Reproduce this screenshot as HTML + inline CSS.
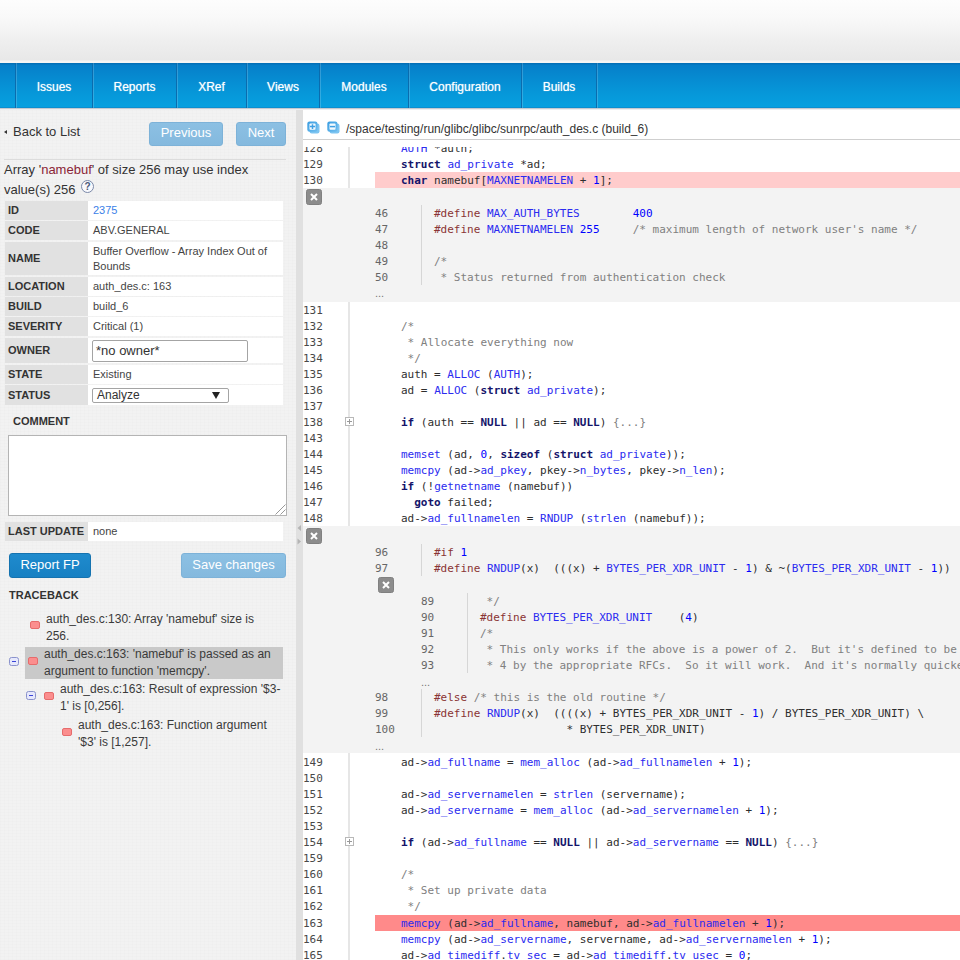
<!DOCTYPE html>
<html lang="en"><head><meta charset="utf-8"><title>Issue 2375 - auth_des.c</title>
<style>
*{box-sizing:border-box;margin:0;padding:0}
html,body{width:960px;height:960px;overflow:hidden;background:#fff;font-family:"Liberation Sans",Arial,sans-serif;}
.abs{position:absolute}
#top{position:absolute;left:0;top:0;width:960px;height:63px;background:linear-gradient(#fdfdfd 0px,#f9f9f9 18px,#efefef 40px,#e8e8e8 60px,#f7f6f4 61px,#f7f6f4 63px)}
#nav{position:absolute;left:0;top:63px;width:960px;height:45px;background:linear-gradient(#0571b8 0,#0571b8 1px,#067fc9 2px,#0688cf 12px,#0697d9 30px,#06a0e0 44px,#0a8fd0 44px,#0a8fd0 45px);box-shadow:0 1px 0 #c4cad0,0 2px 0 #eceef0;z-index:3}
#nav .tab{position:absolute;top:0;height:45px;border-left:1px solid #0a6cae;box-shadow:inset 1px 0 0 rgba(255,255,255,.18);color:#fff;font-size:12px;line-height:49px;text-align:center;text-shadow:0 0 1px rgba(255,255,255,.7)}
#left{position:absolute;left:0;top:108px;width:296px;height:852px;background-color:#f2f2f2;background-image:repeating-linear-gradient(0deg,rgba(0,0,0,.009) 0 1px,transparent 1px 3px),repeating-linear-gradient(90deg,rgba(0,0,0,.009) 0 1px,transparent 1px 4px);color:#333}
#split{position:absolute;left:296px;top:108px;width:7px;height:852px;background:#e0e0e0}
#right{position:absolute;left:303px;top:108px;width:657px;height:852px;background:#fff;overflow:hidden}
.btn{position:absolute;border-radius:3px;color:#fff;text-align:center;font-size:13px}
.btn.dis{background:linear-gradient(#8cc0e3,#84b9de);border:1px solid #7db2d8}
.btn.act{background:linear-gradient(#1f8bcd,#1780c3);border:1px solid #1573b0}
.th{position:absolute;left:5px;width:83px;background:#e1e1e1;padding-left:3px;font-weight:bold;font-size:11px;color:#333}
.td{position:absolute;left:88px;width:195px;background:#fff;padding-left:5px;font-size:11px;color:#444}
.code{font-family:"DejaVu Sans Mono","Liberation Mono",monospace;font-size:11px;line-height:16px;white-space:pre;color:#2e2e2e;position:absolute;height:16px}
.ln{font-family:"DejaVu Sans Mono","Liberation Mono",monospace;font-size:11px;line-height:16px;position:absolute;color:#484848;height:16px}
.ln.sub{color:#666}
.k{font-weight:bold;color:#14146a}
.i{color:#2b2bf0}
.n{color:#0000ff}
.p{color:#8a3434}
.c{color:#808080}
.hl1{position:absolute;left:375px;width:585px;height:16px;background:#ffcccc}
.hl2{position:absolute;left:375px;width:585px;height:16px;background:#ff8a8a}
.panel{position:absolute;left:303px;width:657px;background:#f3f3f3}
.xb{position:absolute;width:16px;height:16px;background:#8c8c8c;border:1px solid #808080;border-radius:2.5px}
.xb svg{position:absolute;left:0;top:0}
.vl{position:absolute;width:2px;background:#e6e6e6}
.vl.s{width:1px;background:#d6d6d6}
.fold{position:absolute;width:9px;height:9px;border:1px solid #b8b8b8;background:#fff}
.fold:before{content:"";position:absolute;left:1px;top:3px;width:5px;height:1px;background:#999}
.fold:after{content:"";position:absolute;left:3px;top:1px;width:1px;height:5px;background:#999}
.dots{position:absolute;font-size:11px;color:#777;font-family:"Liberation Sans",sans-serif;line-height:10px;margin-top:-1px}
.tb{position:absolute;font-size:12px;color:#3a3a3a;line-height:17px}
.bug{position:absolute;width:10px;height:8px;background:#fb8e8e;border:1px solid #e66c6c;border-radius:2px;margin-top:1px}
.tg{position:absolute;width:10px;height:9px;border:1px solid #8a92cc;border-radius:2.5px;background:#e6e8fb;margin-top:1px}
.tg:before{content:"";position:absolute;left:2px;top:3px;width:4px;height:1px;background:#3a44d8}
</style></head><body>
<div id="top"></div>
<div id="nav">
<div class="tab" style="left:15px;width:77px">Issues</div><div class="tab" style="left:92px;width:84px">Reports</div><div class="tab" style="left:176px;width:70px">XRef</div><div class="tab" style="left:246px;width:73px">Views</div><div class="tab" style="left:319px;width:89px">Modules</div><div class="tab" style="left:408px;width:113px">Configuration</div><div class="tab" style="left:521px;width:75px">Builds</div><div class="tab" style="left:596px;width:364px"></div></div>
<div id="left">
<div class="abs" style="left:4px;top:15px;font-size:13px;line-height:17px;color:#333"><span style="display:inline-block;width:0;height:0;border:2.5px solid transparent;border-right:3px solid #333;border-left:0;vertical-align:2px;margin-right:6px"></span>Back to List</div>
<div class="btn dis" style="left:149px;top:14px;width:74px;height:24px;line-height:19px">Previous</div>
<div class="btn dis" style="left:236px;top:14px;width:50px;height:24px;line-height:19px">Next</div>
<div class="abs" style="left:4px;top:51px;width:282px;height:1px;background:#dcdcdc"></div>
<div class="abs" style="left:4px;top:52px;font-size:13px;line-height:20px;color:#333;width:288px">Array '<span style="color:#8a2436">namebuf</span>' of size 256 may use index<br>value(s) 256 <span style="display:inline-block;width:13px;height:13px;border:1px solid #7a88a8;border-radius:50%;background:#f8f9fd;font-size:10px;font-weight:bold;line-height:11px;text-align:center;color:#4a5878;position:relative;top:-4px;left:2px">?</span></div>
<div class="th" style="top:93px;height:19px;line-height:19px">ID</div><div class="td" style="top:93px;height:19px;line-height:19px"><span style="color:#3b7fe8">2375</span></div>
<div class="th" style="top:113px;height:19px;line-height:19px">CODE</div><div class="td" style="top:113px;height:19px;line-height:19px">ABV.GENERAL</div>
<div class="th" style="top:134px;height:33px;line-height:33px">NAME</div><div class="td" style="top:134px;height:33px;line-height:15px;padding-top:2px">Buffer Overflow - Array Index Out of<br>Bounds</div>
<div class="th" style="top:169px;height:19px;line-height:19px">LOCATION</div><div class="td" style="top:169px;height:19px;line-height:19px">auth_des.c: 163</div>
<div class="th" style="top:189px;height:19px;line-height:19px">BUILD</div><div class="td" style="top:189px;height:19px;line-height:19px">build_6</div>
<div class="th" style="top:209px;height:19px;line-height:19px">SEVERITY</div><div class="td" style="top:209px;height:19px;line-height:19px">Critical (1)</div>
<div class="th" style="top:230px;height:25px;line-height:25px">OWNER</div><div class="td" style="top:230px;height:25px;line-height:25px"></div>
<div class="th" style="top:257px;height:19px;line-height:19px">STATE</div><div class="td" style="top:257px;height:19px;line-height:19px">Existing</div>
<div class="th" style="top:277px;height:20px;line-height:20px">STATUS</div><div class="td" style="top:277px;height:20px;line-height:20px"></div>
<div class="th" style="top:414px;height:19px;line-height:19px">LAST UPDATE</div><div class="td" style="top:414px;height:19px;line-height:19px">none</div>
<div class="abs" style="left:92px;top:232px;width:156px;height:22px;border:1px solid #a4a4a4;border-radius:2px;background:#fff;font-size:13px;line-height:20px;padding-left:3px;color:#333">*no owner*</div>
<div class="abs" style="left:92px;top:280px;width:137px;height:15px;border:1px solid #a4a4a4;border-radius:2px;background:#fff;font-size:12px;line-height:13px;padding-left:4px;color:#333">Analyze<span style="position:absolute;left:119px;top:3px;width:0;height:0;border-left:4.5px solid transparent;border-right:4.5px solid transparent;border-top:7px solid #222"></span></div>
<div class="abs" style="left:13px;top:306px;font-size:11px;font-weight:bold;color:#333;line-height:14px">COMMENT</div>
<div class="abs" style="left:8px;top:327px;width:279px;height:81px;background:#fff;border:1px solid #b4b4b4"></div>
<svg class="abs" style="left:274px;top:395px" width="12" height="12"><path d="M1.5 11.5 L11.5 1.5 M6.5 11.5 L11.5 6.5" stroke="#999" stroke-width="1" fill="none"/></svg>
<div class="btn act" style="left:9px;top:445px;width:82px;height:25px;line-height:22px">Report FP</div>
<div class="btn dis" style="left:181px;top:445px;width:105px;height:25px;line-height:22px">Save changes</div>
<div class="abs" style="left:9px;top:480px;font-size:11px;font-weight:bold;color:#333;line-height:14px">TRACEBACK</div>
<div class="abs" style="left:25px;top:539px;width:258px;height:32px;background:#c9c9c9"></div>
<div class="bug" style="left:30px;top:512px"></div>
<div class="tb" style="left:46px;top:503px">auth_des.c:130: Array 'namebuf' size is<br>256.</div>
<div class="tg" style="left:9px;top:548px"></div>
<div class="bug" style="left:28px;top:548px"></div>
<div class="tb" style="left:44px;top:538px">auth_des.c:163: 'namebuf' is passed as an<br>argument to function 'memcpy'.</div>
<div class="tg" style="left:26px;top:582px"></div>
<div class="bug" style="left:44px;top:583px"></div>
<div class="tb" style="left:60px;top:573px">auth_des.c:163: Result of expression '$3-<br>1' is [0,256].</div>
<div class="bug" style="left:62px;top:619px"></div>
<div class="tb" style="left:78px;top:609px">auth_des.c:163: Function argument<br>'$3' is [1,257].</div>
</div>
<div id="split"></div>
<div id="right"></div>
<div class="abs" style="left:303px;top:139px;width:657px;height:1px;background:#cfcfcf"></div>
<div class="abs" style="left:346px;top:121px;font-size:12px;line-height:16px;color:#333">/space/testing/run/glibc/glibc/sunrpc/auth_des.c (build_6)</div>
<svg class="abs" style="left:307px;top:121px" width="13" height="13" viewBox="0 0 13 13"><defs><linearGradient id="iga" x1="0" y1="0" x2="1" y2="1"><stop offset="0" stop-color="#3a9de1"/><stop offset="1" stop-color="#6fbdee"/></linearGradient></defs><rect x="2.5" y="2.5" width="10" height="10" rx="2.2" fill="#7cc4f1"/><rect x="0.3" y="0.5" width="10.2" height="10.2" rx="2.2" fill="url(#iga)"/><rect x="2.5" y="2.5" width="6" height="6.2" rx=".8" fill="#f4fafe"/><path d="M3 5.6 H8 M5.5 3.2 V8" stroke="#3f9fe3" stroke-width="1.5" fill="none"/></svg>
<svg class="abs" style="left:327px;top:121px" width="13" height="13" viewBox="0 0 13 13"><defs><linearGradient id="igb" x1="0" y1="0" x2="1" y2="1"><stop offset="0" stop-color="#3a9de1"/><stop offset="1" stop-color="#6fbdee"/></linearGradient></defs><rect x="2.5" y="2.5" width="10" height="10" rx="2.2" fill="#7cc4f1"/><rect x="0.3" y="0.5" width="10.2" height="10.2" rx="2.2" fill="url(#igb)"/><rect x="2.5" y="2.5" width="6" height="6.2" rx=".8" fill="#f4fafe"/><path d="M3 5.6 H8 " stroke="#3f9fe3" stroke-width="1.5" fill="none"/></svg>
<div class="abs" style="left:0;top:147px;width:960px;height:813px;overflow:hidden"><div class="abs" style="left:0;top:-147px;width:960px;height:960px">
<div class="vl" style="left:348px;top:146px;height:42px"></div><div class="vl" style="left:348px;top:302px;height:224px"></div><div class="vl" style="left:348px;top:753px;height:207px"></div><div class="panel" style="top:188px;height:114px"></div><div class="panel" style="top:526px;height:227px"></div><div class="ln" style="left:303px;top:141px">128</div><div class="code" style="left:401px;top:141px"><span class="i">AUTH</span> *auth;</div>
<div class="ln" style="left:303px;top:157px">129</div><div class="code" style="left:401px;top:157px"><span class="k">struct</span> <span class="i">ad_private</span> *ad;</div>
<div class="hl1" style="top:172px"></div><div class="ln" style="left:303px;top:173px">130</div><div class="code" style="left:401px;top:173px"><span class="k">char</span> namebuf[<span class="i">MAXNETNAMELEN</span> + <span class="n">1</span>];</div>
<div class="ln" style="left:303px;top:303px">131</div>
<div class="ln" style="left:303px;top:319px">132</div><div class="code" style="left:401px;top:319px"><span class="c">/*</span></div>
<div class="ln" style="left:303px;top:335px">133</div><div class="code" style="left:401px;top:335px"><span class="c"> * Allocate everything now</span></div>
<div class="ln" style="left:303px;top:351px">134</div><div class="code" style="left:401px;top:351px"><span class="c"> */</span></div>
<div class="ln" style="left:303px;top:367px">135</div><div class="code" style="left:401px;top:367px">auth = <span class="i">ALLOC</span> (<span class="i">AUTH</span>);</div>
<div class="ln" style="left:303px;top:383px">136</div><div class="code" style="left:401px;top:383px">ad = <span class="i">ALLOC</span> (<span class="k">struct</span> <span class="i">ad_private</span>);</div>
<div class="ln" style="left:303px;top:399px">137</div>
<div class="fold" style="left:345px;top:417px"></div><div class="ln" style="left:303px;top:415px">138</div><div class="code" style="left:401px;top:415px"><span class="k">if</span> (auth == <span class="k">NULL</span> || ad == <span class="k">NULL</span>) <span class="c">{...}</span></div>
<div class="ln" style="left:303px;top:431px">143</div>
<div class="ln" style="left:303px;top:447px">144</div><div class="code" style="left:401px;top:447px"><span class="i">memset</span> (ad, <span class="n">0</span>, <span class="k">sizeof</span> (<span class="k">struct</span> <span class="i">ad_private</span>));</div>
<div class="ln" style="left:303px;top:463px">145</div><div class="code" style="left:401px;top:463px"><span class="i">memcpy</span> (ad-&gt;<span class="i">ad_pkey</span>, pkey-&gt;<span class="i">n_bytes</span>, pkey-&gt;<span class="i">n_len</span>);</div>
<div class="ln" style="left:303px;top:479px">146</div><div class="code" style="left:401px;top:479px"><span class="k">if</span> (!<span class="i">getnetname</span> (namebuf))</div>
<div class="ln" style="left:303px;top:495px">147</div><div class="code" style="left:401px;top:495px">  <span class="k">goto</span> failed;</div>
<div class="ln" style="left:303px;top:511px">148</div><div class="code" style="left:401px;top:511px">ad-&gt;<span class="i">ad_fullnamelen</span> = <span class="i">RNDUP</span> (<span class="i">strlen</span> (namebuf));</div>
<div class="ln" style="left:303px;top:755px">149</div><div class="code" style="left:401px;top:755px">ad-&gt;<span class="i">ad_fullname</span> = <span class="i">mem_alloc</span> (ad-&gt;<span class="i">ad_fullnamelen</span> + <span class="n">1</span>);</div>
<div class="ln" style="left:303px;top:771px">150</div>
<div class="ln" style="left:303px;top:787px">151</div><div class="code" style="left:401px;top:787px">ad-&gt;<span class="i">ad_servernamelen</span> = <span class="i">strlen</span> (servername);</div>
<div class="ln" style="left:303px;top:803px">152</div><div class="code" style="left:401px;top:803px">ad-&gt;<span class="i">ad_servername</span> = <span class="i">mem_alloc</span> (ad-&gt;<span class="i">ad_servernamelen</span> + <span class="n">1</span>);</div>
<div class="ln" style="left:303px;top:819px">153</div>
<div class="fold" style="left:345px;top:837px"></div><div class="ln" style="left:303px;top:835px">154</div><div class="code" style="left:401px;top:835px"><span class="k">if</span> (ad-&gt;<span class="i">ad_fullname</span> == <span class="k">NULL</span> || ad-&gt;<span class="i">ad_servername</span> == <span class="k">NULL</span>) <span class="c">{...}</span></div>
<div class="ln" style="left:303px;top:851px">159</div>
<div class="ln" style="left:303px;top:867px">160</div><div class="code" style="left:401px;top:867px"><span class="c">/*</span></div>
<div class="ln" style="left:303px;top:883px">161</div><div class="code" style="left:401px;top:883px"><span class="c"> * Set up private data</span></div>
<div class="ln" style="left:303px;top:899px">162</div><div class="code" style="left:401px;top:899px"><span class="c"> */</span></div>
<div class="hl2" style="top:915px"></div><div class="ln" style="left:303px;top:916px">163</div><div class="code" style="left:401px;top:916px"><span class="i">memcpy</span> (ad-&gt;<span class="i">ad_fullname</span>, namebuf, ad-&gt;<span class="i">ad_fullnamelen</span> + <span class="n">1</span>);</div>
<div class="ln" style="left:303px;top:932px">164</div><div class="code" style="left:401px;top:932px"><span class="i">memcpy</span> (ad-&gt;<span class="i">ad_servername</span>, servername, ad-&gt;<span class="i">ad_servernamelen</span> + <span class="n">1</span>);</div>
<div class="ln" style="left:303px;top:948px">165</div><div class="code" style="left:401px;top:948px">ad-&gt;<span class="i">ad_timediff</span>.<span class="i">tv_sec</span> = ad-&gt;<span class="i">ad_timediff</span>.<span class="i">tv_usec</span> = <span class="n">0</span>;</div>
<div class="ln sub" style="left:375px;top:206px">46</div><div class="code" style="left:434px;top:206px"><span class="p">#define</span> <span class="i">MAX_AUTH_BYTES</span>        <span class="n">400</span></div>
<div class="ln sub" style="left:375px;top:222px">47</div><div class="code" style="left:434px;top:222px"><span class="p">#define</span> <span class="i">MAXNETNAMELEN</span> <span class="n">255</span>     <span class="c">/* maximum length of network user's name */</span></div>
<div class="ln sub" style="left:375px;top:238px">48</div>
<div class="ln sub" style="left:375px;top:254px">49</div><div class="code" style="left:434px;top:254px"><span class="c">/*</span></div>
<div class="ln sub" style="left:375px;top:270px">50</div><div class="code" style="left:434px;top:270px"><span class="c"> * Status returned from authentication check</span></div>
<div class="ln sub" style="left:375px;top:545px">96</div><div class="code" style="left:434px;top:545px"><span class="p">#if</span> <span class="n">1</span></div>
<div class="ln sub" style="left:375px;top:561px">97</div><div class="code" style="left:434px;top:561px"><span class="p">#define</span> <span class="i">RNDUP</span>(x)  (((x) + <span class="i">BYTES_PER_XDR_UNIT</span> - <span class="n">1</span>) &amp; ~(<span class="i">BYTES_PER_XDR_UNIT</span> - <span class="n">1</span>))</div>
<div class="ln sub" style="left:421px;top:594px">89</div><div class="code" style="left:480px;top:594px"><span class="c"> */</span></div>
<div class="ln sub" style="left:421px;top:610px">90</div><div class="code" style="left:480px;top:610px"><span class="p">#define</span> <span class="i">BYTES_PER_XDR_UNIT</span>    (<span class="n">4</span>)</div>
<div class="ln sub" style="left:421px;top:626px">91</div><div class="code" style="left:480px;top:626px"><span class="c">/*</span></div>
<div class="ln sub" style="left:421px;top:642px">92</div><div class="code" style="left:480px;top:642px"><span class="c"> * This only works if the above is a power of 2.  But it's defined to be</span></div>
<div class="ln sub" style="left:421px;top:658px">93</div><div class="code" style="left:480px;top:658px"><span class="c"> * 4 by the appropriate RFCs.  So it will work.  And it's normally quicker</span></div>
<div class="ln sub" style="left:375px;top:690px">98</div><div class="code" style="left:434px;top:690px"><span class="p">#else</span> <span class="c">/* this is the old routine */</span></div>
<div class="ln sub" style="left:375px;top:706px">99</div><div class="code" style="left:434px;top:706px"><span class="p">#define</span> <span class="i">RNDUP</span>(x)  ((((x) + BYTES_PER_XDR_UNIT - <span class="n">1</span>) / BYTES_PER_XDR_UNIT) \</div>
<div class="ln sub" style="left:375px;top:722px">100</div><div class="code" style="left:434px;top:722px">                    * BYTES_PER_XDR_UNIT)</div>
<div class="vl s" style="left:421px;top:205px;height:80px"></div><div class="vl s" style="left:421px;top:544px;height:32px"></div><div class="vl s" style="left:467px;top:593px;height:80px"></div><div class="vl s" style="left:421px;top:689px;height:48px"></div><div class="dots" style="left:375px;top:289px">...</div><div class="dots" style="left:421px;top:678px">...</div><div class="dots" style="left:375px;top:742px">...</div><div class="xb" style="left:306px;top:189px"><svg width="14" height="14" viewBox="0 0 14 14"><path d="M4 4 L10 10 M10 4 L4 10" stroke="#fff" stroke-width="2"/></svg></div><div class="xb" style="left:306px;top:528px"><svg width="14" height="14" viewBox="0 0 14 14"><path d="M4 4 L10 10 M10 4 L4 10" stroke="#fff" stroke-width="2"/></svg></div><div class="xb" style="left:378px;top:577px"><svg width="14" height="14" viewBox="0 0 14 14"><path d="M4 4 L10 10 M10 4 L4 10" stroke="#fff" stroke-width="2"/></svg></div></div></div>
<svg class="abs" style="left:296px;top:523px" width="7" height="24" viewBox="0 0 7 24"><path d="M5 2 L1.5 5 L5 8 Z M1.5 15.5 L5 18.5 L1.5 21.5 Z" fill="#b4b4b4"/></svg>
</body></html>
